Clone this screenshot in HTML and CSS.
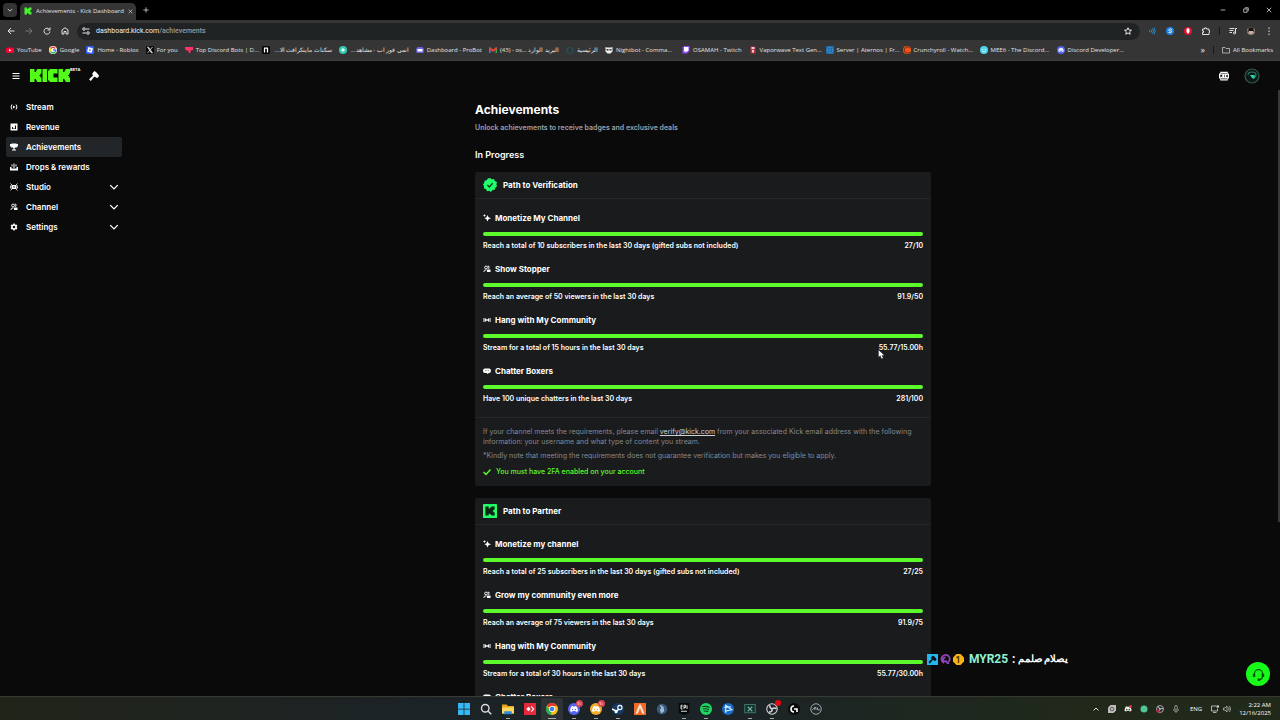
FILE: index.html
```html
<!DOCTYPE html>
<html lang="en">
<head>
  <meta charset="UTF-8">
  <meta name="viewport" content="width=device-width, initial-scale=1.0">
  <title>Achievements - Kick Dashboard</title>
  <link rel="stylesheet" href="styles.css">
</head>
<body>
  <!-- Shared icons -->
  <svg class="sprite" aria-hidden="true">
    <symbol id="i-chevron" viewBox="0 0 16 16"><path d="M2 5l6 6 6-6" fill="none" stroke="currentColor" stroke-width="2.200"/></symbol>
    <symbol id="i-kick" viewBox="0 0 16 16"><path fill="currentColor" d="M1 1h5v3h2V2.500h2V1h5v5h-2v1.500h-1v1h1V10h2v5h-5v-1.500H8V12H6v3H1z"/></symbol>
    <symbol id="i-hammer" viewBox="0 0 16 16"><path fill="currentColor" d="M7 1.500l2-1.500 3 2.500L16 7l-1 3-2.500 1-3-2L8 9.500 3 16l-3-3 6.500-6L5 4.500z"/></symbol>
    <symbol id="i-live" viewBox="0 0 16 16"><path d="M4 3Q0 8 4 13M12 3q4 5 0 10" fill="none" stroke="currentColor" stroke-width="2"/><path fill="currentColor" d="M6 5l5 3-5 3z"/></symbol>
    <symbol id="i-waves" viewBox="0 0 16 16"><path d="M2 4v8M5 5v6M11 5v6M14 4v8" fill="none" stroke="currentColor" stroke-width="2"/><circle cx="8" cy="8" r="1.800" fill="currentColor"/></symbol>
    <symbol id="i-people" viewBox="0 0 16 16"><circle cx="6" cy="5" r="2.800" fill="none" stroke="currentColor" stroke-width="1.800"/><path d="M2 14v-2q0-2 4-2h1M9 2.500h3v4h-2" fill="none" stroke="currentColor" stroke-width="1.800"/><path fill="currentColor" d="M8 9h7v5H8z"/></symbol>
    <symbol id="i-spark" viewBox="0 0 16 16"><path fill="currentColor" d="M9 2l2 4.500L16 8.500 11 10.500 9 15l-2-4.500L3 8.500l4-2zM3 0l1 2.200L6 3l-2 .8L3 6l-1-2.200L0 3l2-.8z"/></symbol>
    <symbol id="i-chat" viewBox="0 0 16 16"><path fill="currentColor" fill-rule="evenodd" d="M4 3h8q4 0 4 4.500T12 12l-4 2v-2H4q-4 0-4-4.500T4 3zm0 4v1h2V7zm3 0v1h2V7zm3 0v1h2V7z"/></symbol>
    <symbol id="i-discord" viewBox="0 0 16 16"><path fill="currentColor" fill-rule="evenodd" d="M3 4q2-1.500 3-1.300l.5.800h3l.5-.8q1-.2 3 1.300 2 4 2 7.500-1.500 1.500-3.500 1.500l-1-1.500H5.500l-1 1.500Q2.500 13 1 11.500 1 8 3 4zm2.500 3.500a1.300 1.400 0 100 2.800 1.300 1.400 0 000-2.800zm5 0a1.300 1.400 0 100 2.800 1.300 1.400 0 000-2.800z"/></symbol>
    <symbol id="i-obs" viewBox="0 0 16 16"><circle cx="8" cy="8" r="7" fill="#202329" stroke="#d8d8d8" stroke-width="1.400"/><path d="M8 8Q5 7 5 3M8 8q3-3 6 0M8 8q1 4-4 4" fill="none" stroke="#d8d8d8" stroke-width="2"/></symbol>
  </svg>

  <!-- Browser chrome -->
  <div class="browser">
    <div class="tab-strip">
      <button class="tab-search" aria-label="Search tabs"><svg><use href="#i-chevron"/></svg></button>
      <div class="tab">
        <svg class="tab-icon"><use href="#i-kick"/></svg>
        <span>Achievements - Kick Dashboard</span>
        <button class="tab-close" aria-label="Close tab"><svg viewBox="0 0 16 16"><path d="M2 2l12 12M14 2L2 14"/></svg></button>
      </div>
      <button class="new-tab" aria-label="New tab"><svg viewBox="0 0 16 16"><path d="M8 1v14M1 8h14"/></svg></button>
      <div class="window-controls">
        <button aria-label="Minimize"><svg viewBox="0 0 16 16"><path d="M2 8h12"/></svg></button>
        <button aria-label="Restore"><svg viewBox="0 0 16 16"><path d="M2 5h9v9H2zM5 2h9v9"/></svg></button>
        <button aria-label="Close"><svg viewBox="0 0 16 16"><path d="M2 2l12 12M14 2L2 14"/></svg></button>
      </div>
    </div>

    <div class="toolbar">
      <div class="nav-buttons">
        <button aria-label="Back"><svg viewBox="0 0 16 16"><path d="M15 8H2M8 2L2 8l6 6"/></svg></button>
        <button class="disabled" aria-label="Forward"><svg viewBox="0 0 16 16"><path d="M1 8h13M8 2l6 6-6 6"/></svg></button>
        <button aria-label="Reload"><svg viewBox="0 0 16 16"><path d="M13 5a6 6 0 1 0 1 4M14 1v5H9"/></svg></button>
        <button aria-label="Home"><svg viewBox="0 0 16 16"><path d="M2 14V6l6-4.500L14 6v8H10V9H6v5z"/></svg></button>
      </div>
      <div class="address-bar">
        <svg viewBox="0 0 16 16"><path d="M8 4h7M1 12h7"/><circle cx="4" cy="4" r="2.500"/><circle cx="12" cy="12" r="2.500"/></svg>
        <span class="url"><b>dashboard.kick.com</b>/achievements</span>
        <svg viewBox="0 0 16 16"><path d="M8 1.500l2 4.500 5 .4-3.800 3.200L12.400 14.500 8 12l-4.400 2.500 1.200-4.900L1 6.400 6 6z"/></svg>
      </div>
      <div class="extensions">
        <svg class="blue" viewBox="0 0 16 16"><path d="M3 7v3M6 5q2 3 0 6M9 3q4 5 0 10M12 1q5 7 0 14"/></svg>
        <svg viewBox="0 0 16 16"><circle class="ext-blue" cx="8" cy="8" r="8"/><path d="M12 5q-4-3-7 1 0 2 6 2 1 5-6 3"/></svg>
        <svg viewBox="0 0 16 16"><path class="ext-red" d="M4.500 0h7L16 4.500v7L11.500 16h-7L0 11.500v-7z"/><path class="ext-hand" d="M5 5l1-2 2-1 3 2v6l-2 3H7L5 10z"/></svg>
        <svg viewBox="0 0 16 16"><path d="M1 4h4V2h4v2h5v4h1v3h-1v4H1v-4h2V8H1z"/></svg>
        <span class="divider"></span>
        <svg viewBox="0 0 16 16"><path d="M1 3h10M1 7h8M1 11h5M13 3v9M13 3h3"/><circle cx="11" cy="12" r="2"/></svg>
        <svg viewBox="0 0 16 16"><circle fill="#8c8580" stroke="none" cx="8" cy="8" r="8"/><path fill="#181214" stroke="none" d="M3 1h10v6l3 2H0l3-2z"/><path fill="#d9a9a2" stroke="none" d="M4 8h8v4l-4 2-4-2z"/></svg>
        <svg viewBox="0 0 16 16"><path d="M8 1v3M8 7v3M8 13v3"/></svg>
      </div>
    </div>

    <nav class="bookmarks" aria-label="Bookmarks">
      <a href="#"><svg viewBox="0 0 16 16"><rect y="3" width="16" height="11" rx="3" fill="#f03"/><path fill="#fff" d="M6 6l5 2.500L6 11z"/></svg><span>YouTube</span></a>
      <a href="#"><svg viewBox="0 0 16 16"><circle cx="8" cy="8" r="8" fill="#fff"/><g fill="none" stroke-width="3"><path d="M12.500 5A5.300 5.300 0 0 0 3.500 5" stroke="#ea4335"/><path d="M3.500 5a5.500 5.500 0 0 0 0 6" stroke="#fbbc05"/><path d="M3.500 11a5.300 5.300 0 0 0 8.500 1" stroke="#34a853"/><path d="M12 12q1.500-2 1.300-4H8" stroke="#4285f4"/></g></svg><span>Google</span></a>
      <a href="#"><svg viewBox="0 0 16 16"><rect width="16" height="16" rx="3" fill="#335fff"/><path fill="#fff" fill-rule="evenodd" d="M5 2l9 3-3 9-9-3zm1.500 4.500L6 9l3 1 .8-2.700z"/></svg><span>Home - Roblox</span></a>
      <a href="#"><svg viewBox="0 0 16 16"><rect width="16" height="16" rx="2" fill="#080808"/><path d="M3 2l8 12h2L5 2zM13 2L3 14" fill="none" stroke="#fff" stroke-width="1.500"/></svg><span>For you</span></a>
      <a class="wide" href="#"><svg viewBox="0 0 16 16"><path fill="#ff3366" d="M0 2h16v6l-5 1v5H8L6 9H3L0 6z"/></svg><span>Top Discord Bots | D...</span></a>
      <a class="wide" href="#"><svg viewBox="0 0 16 16"><rect width="16" height="16" rx="2" fill="#050505"/><path d="M5 13V4h6v9" fill="none" stroke="#fff" stroke-width="2.500"/></svg><span dir="rtl">سكنات ماينكرافت الا...</span></a>
      <a class="wide" href="#"><svg viewBox="0 0 16 16"><circle cx="8" cy="8" r="8" fill="#35c9b4"/><path d="M4 8l4-4 4 4-4 4z" fill="#e8fffa"/></svg><span dir="rtl">انمي فور اب - مشاهد...</span></a>
      <a href="#"><svg viewBox="0 0 16 16"><path fill="#6b61d8" d="M3 2h10l3 4-1 8H1L0 6z"/><path fill="#fff" d="M3 6h10v5H3z"/></svg><span>Dashboard - ProBot</span></a>
      <a class="wide" href="#"><svg viewBox="0 0 16 16"><path fill="#4285f4" d="M0 3h3v11H0z"/><path fill="#34a853" d="M13 3h3v11h-3z"/><path fill="#ea4335" d="M0 3h3l5 4 5-4h3v3l-8 6-8-6z"/></svg><span>(43) - os... البريد الوارد</span></a>
      <a href="#"><svg viewBox="0 0 16 16"><path d="M2 6l6-4 6 4v6l-6 3-6-3z" fill="none" stroke="#175e69" stroke-width="2"/></svg><span dir="rtl">الرئيسية</span></a>
      <a class="wide" href="#"><svg viewBox="0 0 16 16"><path fill="#eee" d="M1 2l3 1h8l3-1v9l-4 4H5l-4-4z"/><path fill="#333" d="M3 6h4v3H3zM9 6h4v3H9z"/></svg><span>Nightbot - Comma...</span></a>
      <a href="#"><svg viewBox="0 0 16 16"><path fill="#9146ff" d="M1 3l3-3h11v10l-5 5H1z"/><path fill="#fff" d="M4 2h9v7l-2 2H8l-2 2v-2H4z"/></svg><span>OSAMAH - Twitch</span></a>
      <a class="wide" href="#"><svg viewBox="0 0 16 16"><path fill="#bd3548" d="M3 1h10v14H3z"/><path fill="#f0c9cc" d="M5 2h6v4H5zM6 8h4v5H6z"/></svg><span>Vaporwave Text Gen...</span></a>
      <a class="wide" href="#"><svg viewBox="0 0 16 16"><path fill="#1768a5" d="M0 0h16v16H0z"/><path d="M3 3h10v10H3zM0 8h16M8 0v16" fill="none" stroke="#4a9ad4"/></svg><span>Server | Aternos | Fr...</span></a>
      <a class="wide" href="#"><svg viewBox="0 0 16 16"><circle cx="8" cy="8" r="8" fill="#ef5818"/><path d="M13 12a6 6 0 1 1 0-8" fill="none" stroke="#7b280b" stroke-width="2"/></svg><span>Crunchyroll - Watch...</span></a>
      <a class="wide" href="#"><svg viewBox="0 0 16 16"><circle cx="8" cy="8" r="8" fill="#51d5ea"/><path d="M4 7h2M10 7h2M5 10q3 3 6 0" fill="none" stroke="#fff" stroke-width="1.500"/></svg><span>MEE6 - The Discord...</span></a>
      <a class="wide" href="#"><svg viewBox="0 0 16 16"><circle cx="8" cy="8" r="8" fill="#5865f2"/><use href="#i-discord" x="2" y="2" width="12" height="12" color="#fff"/></svg><span>Discord Developer...</span></a>
      <div class="bookmarks-end">
        <button aria-label="More bookmarks">»</button>
        <span class="divider"></span>
        <a href="#"><svg viewBox="0 0 16 16"><path d="M1 3h5l2 2h7v9H1z" fill="none" stroke="#ccc" stroke-width="1.500"/></svg><span>All Bookmarks</span></a>
      </div>
    </nav>
  </div>

  <!-- Dashboard -->
  <div class="app">
    <header class="app-header">
      <button class="menu-btn" aria-label="Menu"><svg viewBox="0 0 16 16"><path d="M1 3h14M1 8h14M1 13h14"/></svg></button>
      <a class="logo" href="#" aria-label="Kick">
        <svg viewBox="0 0 40 13"><path fill="currentColor" d="M0 0h4.500v3H6V1.500h1V0h4.500v4.500h-1V6h-1v1h1v1.500h1V13H7v-1.500H6V10H4.500v3H0zM12.500 0H17v13h-4.500zM19.500 0h8v4.500h-4v4h4V13h-8v-1.500H18v-10h1.500zM28.500 0H33v3h1.500V1.500h1V0H40v4.500h-1V6h-1v1h1v1.500h1V13h-4.500v-1.500h-1V10H33v3h-4.500z"/></svg>
      </a>
      <sup class="beta">BETA</sup>
      <svg class="mod-icon"><use href="#i-hammer"/></svg>
      <div class="header-right">
        <button aria-label="Go to channel"><svg viewBox="0 0 16 16"><path fill="currentColor" fill-rule="evenodd" d="M2 1h12v3h2v8h-2v3H2v-3H0V4h2zm1 2v1h10V3zm0 9v1h10v-1zM2 6v4h1V8l2 2h1L4.500 8 6 6zm6 0v4h1V6zm5 0l-2 2 2 2h1V6z"/></svg></button>
        <button class="avatar" aria-label="Account"><svg viewBox="0 0 16 16"><circle cx="8" cy="8" r="7" fill="#0c1917" stroke="#315b51" stroke-width="1.200"/><path d="M4 7q0-3 4-3t4 3q0 2-2 3" fill="none" stroke="#37766a" stroke-width="1.200"/><path fill="#26d6a3" d="M6 7h5l-1 4-2-1z"/></svg></button>
      </div>
    </header>

    <div class="app-body">
      <nav class="sidebar">
        <a href="#"><svg><use href="#i-live"/></svg>Stream</a>
        <a href="#"><svg viewBox="0 0 16 16"><path fill="currentColor" fill-rule="evenodd" d="M1 1h14v14H1zm3 7v4h2V8zm3 2v2h2v-2zm3-5v7h2V5z"/></svg>Revenue</a>
        <a class="active" href="#"><svg viewBox="0 0 16 16"><path fill="currentColor" d="M3 1h10v1h3v4l-3 3H10l-1 2v2h3v2H4v-2h3v-2L6 9H3L0 6V2h3z"/></svg>Achievements</a>
        <a href="#"><svg viewBox="0 0 16 16"><path fill="currentColor" d="M0 8h3v3h10V8h3v7H0zM7 1h2v9H7zM3 3h2v4H3zM11 3h2v4h-2z"/></svg>Drops &amp; rewards</a>
        <a href="#"><svg viewBox="0 0 16 16"><path fill="currentColor" d="M3 4h10v8H3z"/><path d="M1 1l3 3M15 1l-3 3M1 15l3-3M15 15l-3-3M1 5v6M15 5v6" stroke="currentColor" stroke-width="1.500"/><circle cx="8" cy="8" r="1.500" fill="#111"/></svg>Studio<svg class="chevron"><use href="#i-chevron"/></svg></a>
        <a href="#"><svg><use href="#i-people"/></svg>Channel<svg class="chevron"><use href="#i-chevron"/></svg></a>
        <a href="#"><svg viewBox="0 0 16 16"><circle cx="8" cy="8" r="4" fill="none" stroke="currentColor" stroke-width="3"/><path d="M8 1v3M8 12v3M2 4.500L4.500 6M11.500 10l2.500 1.500M2 11.500L4.500 10M11.500 6L14 4.500" stroke="currentColor" stroke-width="3"/></svg>Settings<svg class="chevron"><use href="#i-chevron"/></svg></a>
      </nav>

      <main class="content">
        <h1>Achievements</h1>
        <p class="subtitle">Unlock achievements to receive badges and exclusive deals</p>
        <h2>In Progress</h2>

        <section class="card">
          <header class="card-header">
            <svg viewBox="0 0 16 16"><path fill="#1eff6b" d="M8 0l2 1.500L12.500 1l1 2.300L16 4.500 15.300 7 16 9.500l-2 1.500-.5 2.500-2.500.3L9 16l-2-1.500-2.500.5L3.500 12.700 1 12l.2-2.500L0 7.500 1.500 5.500 1.800 3l2.500-.5L5.500.5z"/><path d="M5 8l2.200 2.200L11 6" fill="none" stroke="#10351c" stroke-width="1.500"/></svg>
            <h3>Path to Verification</h3>
          </header>
          <div class="goals">
            <div class="goal">
              <h4><svg><use href="#i-spark"/></svg>Monetize My Channel</h4>
              <div class="bar"></div>
              <p><span>Reach a total of 10 subscribers in the last 30 days (gifted subs not included)</span><span>27/10</span></p>
            </div>
            <div class="goal">
              <h4><svg><use href="#i-people"/></svg>Show Stopper</h4>
              <div class="bar"></div>
              <p><span>Reach an average of 50 viewers in the last 30 days</span><span>91.9/50</span></p>
            </div>
            <div class="goal">
              <h4><svg><use href="#i-waves"/></svg>Hang with My Community</h4>
              <div class="bar"></div>
              <p><span>Stream for a total of 15 hours in the last 30 days</span><span>55.77/15.00h</span></p>
            </div>
            <div class="goal">
              <h4><svg><use href="#i-chat"/></svg>Chatter Boxers</h4>
              <div class="bar"></div>
              <p><span>Have 100 unique chatters in the last 30 days</span><span>281/100</span></p>
            </div>
          </div>
          <footer class="card-footer">
            <p>If your channel meets the requirements, please email <a href="mailto:verify@kick.com">verify@kick.com</a> from your associated Kick email address with the following information: your username and what type of content you stream.</p>
            <p>*Kindly note that meeting the requirements does not guarantee verification but makes you eligible to apply.</p>
            <p class="requirement"><svg viewBox="0 0 16 16"><path d="M1 8l5 5L15 3" fill="none" stroke="currentColor" stroke-width="3"/></svg>You must have 2FA enabled on your account</p>
          </footer>
        </section>

        <section class="card">
          <header class="card-header">
            <svg viewBox="0 0 16 16"><rect width="16" height="16" rx="1" fill="#22ff66"/><use href="#i-kick" x="2" y="2" width="12" height="12" color="#0b2413"/></svg>
            <h3>Path to Partner</h3>
          </header>
          <div class="goals">
            <div class="goal">
              <h4><svg><use href="#i-spark"/></svg>Monetize my channel</h4>
              <div class="bar"></div>
              <p><span>Reach a total of 25 subscribers in the last 30 days (gifted subs not included)</span><span>27/25</span></p>
            </div>
            <div class="goal">
              <h4><svg><use href="#i-people"/></svg>Grow my community even more</h4>
              <div class="bar"></div>
              <p><span>Reach an average of 75 viewers in the last 30 days</span><span>91.9/75</span></p>
            </div>
            <div class="goal">
              <h4><svg><use href="#i-waves"/></svg>Hang with My Community</h4>
              <div class="bar"></div>
              <p><span>Stream for a total of 30 hours in the last 30 days</span><span>55.77/30.00h</span></p>
            </div>
            <div class="goal">
              <h4><svg><use href="#i-chat"/></svg>Chatter Boxers</h4>
              <div class="bar"></div>
            </div>
          </div>
        </section>
      </main>
    </div>
    <div class="scroll-thumb"></div>

    <button class="help-btn" aria-label="Support"><svg viewBox="0 0 16 16"><path d="M3 10V7a5 5 0 0 1 10 0v3q0 4-5 4.500" fill="none" stroke="#07500c" stroke-width="1.500"/><path fill="#07500c" d="M1 7h3v4H1zM12 7h3v4h-3zM7 13h3v3H7z"/></svg></button>

    <div class="chat-overlay">
      <svg viewBox="0 0 16 16"><rect width="16" height="16" fill="#22b7ee"/><use href="#i-hammer" x="2" y="2" width="12" height="12" color="#07151c"/></svg>
      <svg viewBox="0 0 16 16"><path d="M6 13a6 6 0 1 1 6-1M8 5a3 3 0 1 0 2 5" fill="none" stroke="#9146b8" stroke-width="2.500"/><path fill="#9146b8" d="M8 8l6 6-4 1z"/></svg>
      <svg viewBox="0 0 16 16"><path fill="#f5b314" d="M5 0h6l5 5v6l-5 5H5l-5-5V5z"/><path fill="#5c3a00" d="M5 4l2-1h2v10H7V6H5z"/></svg>
      <span class="chat-name">MYR25</span>
      <span>:</span>
      <span class="chat-text" dir="rtl">يصلام صلمم</span>
    </div>
  </div>

  <!-- Windows taskbar -->
  <footer class="taskbar">
    <div class="pinned">
      <button aria-label="Start"><svg viewBox="0 0 16 16"><path fill="#35b9f5" d="M0 0h7.500v7.500H0zM8.500 0H16v7.500H8.500zM0 8.500h7.500V16H0zM8.500 8.500H16V16H8.500z"/></svg></button>
      <button aria-label="Search"><svg viewBox="0 0 16 16"><circle cx="7" cy="7" r="5" fill="none" stroke="#ddd" stroke-width="1.800"/><path d="M11 11l4 4" stroke="#ddd" stroke-width="2"/></svg></button>
      <button class="open" aria-label="File Explorer"><svg viewBox="0 0 16 16"><path fill="#e8a51e" d="M0 2h6l2 2h8v10H0z"/><path fill="#ffd75e" d="M0 6h16v8H0z"/><path fill="#2a8be0" d="M3 11h10v4H3z"/></svg></button>
      <button aria-label="AnyDesk"><svg viewBox="0 0 16 16"><path fill="#e5283a" d="M0 0h16v16H0z"/><path fill="#fff" d="M6 5l3 3-3 3-3-3zM9 5l1-1 4 4-4 4-1-1 3-3z"/></svg></button>
      <button class="open current" aria-label="Chrome"><svg viewBox="0 0 16 16"><circle cx="8" cy="8" r="8" fill="#fbc116"/><path fill="#e33b2e" d="M8 8L1 4a8 8 0 0 1 14 0H8z"/><path fill="#2da94f" d="M1 4l6 8v4A8 8 0 0 1 1 4z"/><circle cx="8" cy="8" r="4" fill="#fff"/><circle cx="8" cy="8" r="3" fill="#3b7de9"/></svg></button>
      <button class="open" aria-label="Discord"><svg viewBox="0 0 16 16"><circle cx="8" cy="8" r="8" fill="#5865f2"/><use href="#i-discord" x="2" y="2" width="12" height="12" color="#fff"/></svg><span class="badge">9+</span></button>
      <button class="open" aria-label="Discord Canary"><svg viewBox="0 0 16 16"><circle cx="8" cy="8" r="8" fill="#f3ae2b"/><use href="#i-discord" x="2" y="2" width="12" height="12" color="#fff"/></svg><span class="badge">9+</span></button>
      <button class="open" aria-label="Steam"><svg viewBox="0 0 16 16"><circle cx="8" cy="8" r="8" fill="#143a63"/><circle cx="10.500" cy="6" r="2.800" fill="none" stroke="#fff" stroke-width="1.500"/><path d="M0 8l6 3 3-3" fill="none" stroke="#fff" stroke-width="2"/><circle cx="5.500" cy="11.500" r="2" fill="#fff"/></svg></button>
      <button aria-label="FiveM"><svg viewBox="0 0 16 16"><path fill="#ef6b27" d="M0 0h16v16H0z"/><path fill="#f8e3d5" d="M7 2h2l5 12h-3L8 7l-3 7H2z"/></svg></button>
      <button aria-label="Launcher"><svg viewBox="0 0 16 16"><circle cx="8" cy="8" r="7" fill="#385978"/><path fill="#9eb9d3" d="M5 2l5 3 1 6-4 3-2-5 2-2z"/></svg></button>
      <button class="open" aria-label="Epic Games"><svg viewBox="0 0 16 16"><path fill="#080808" d="M1 0h14v13l-7 3-7-3z"/><path d="M4 3v5M4 3h2M4 5h2M4 8h2M8 8V3h2v3H8M12 3v5M4 11h8" fill="none" stroke="#eee" stroke-width="1.200"/></svg></button>
      <button class="open" aria-label="Spotify"><svg viewBox="0 0 16 16"><circle cx="8" cy="8" r="8" fill="#1ed760"/><path d="M3 5q5-1.500 10 1M4 8q4-1 8 1M5 11q3-1 6 .5" fill="none" stroke="#123c21" stroke-width="1.500"/></svg></button>
      <button aria-label="Battle.net"><svg viewBox="0 0 16 16"><circle cx="8" cy="8" r="8" fill="#176bc7"/><path d="M5 13V3l8 6-9 2M3 6l9-1" fill="none" stroke="#d5f2ff" stroke-width="1.500"/></svg></button>
      <button class="open" aria-label="Xbox Game Bar"><svg viewBox="0 0 16 16"><rect x="1" y="2" width="14" height="11" fill="#16312c" stroke="#447e70" stroke-width="1.200"/><path d="M5 5l6 6M11 5l-6 6" stroke="#6bb49e" stroke-width="1.500"/></svg></button>
      <button class="open" aria-label="OBS Studio"><svg><use href="#i-obs"/></svg><span class="badge dot"></span></button>
      <button aria-label="Logitech G Hub"><svg viewBox="0 0 16 16"><circle cx="8" cy="8" r="8" fill="#090a0a"/><path d="M8 4a4 4 0 0 0 0 8M8 8h4v4" fill="none" stroke="#fff" stroke-width="2.200"/></svg></button>
      <button aria-label="JBL"><svg viewBox="0 0 16 16"><circle cx="8" cy="8" r="7" fill="#22282a" stroke="#ccc"/><path d="M3 9l2-2M6 9V6h2v3M10 9V6M10 9h3" fill="none" stroke="#ccc"/></svg></button>
    </div>
    <div class="tray">
      <svg viewBox="0 0 16 16"><path d="M3 11l5-5 5 5" fill="none" stroke="#ddd" stroke-width="2"/></svg>
      <svg viewBox="0 0 16 16"><path fill="#bbb" d="M5 0h11v11l-5 5H0V5z"/><circle cx="8" cy="8" r="3.500" fill="none" stroke="#444" stroke-width="1.500"/></svg>
      <svg viewBox="0 0 16 16"><use href="#i-discord" color="#eee"/><circle cx="13" cy="3" r="3" fill="#e33445"/></svg>
      <svg viewBox="0 0 16 16"><circle cx="8" cy="8" r="7" fill="#4cc795"/></svg>
      <svg viewBox="0 0 16 16"><use href="#i-obs"/><circle cx="4" cy="12" r="3.500" fill="#b9253c"/></svg>
      <svg viewBox="0 0 16 16"><rect x="5.500" y="1" width="5" height="9" rx="2.500" fill="none" stroke="#bbb" stroke-width="1.500"/><path d="M3 8q0 5 5 5t5-5M8 13v3" fill="none" stroke="#bbb" stroke-width="1.300"/></svg>
      <span class="lang">ENG</span>
      <div class="quick-settings">
        <svg viewBox="0 0 16 16"><path d="M10 2H1v10h12V7M4 15h7" fill="none" stroke="#ddd" stroke-width="1.500"/><path fill="#ddd" d="M11 1h5v4h-5z"/></svg>
        <svg viewBox="0 0 16 16"><path d="M1 6h3l4-4v12l-4-4H1zM11 5q2 3 0 6M13 2q4 6 0 12" fill="none" stroke="#ddd" stroke-width="1.300"/></svg>
      </div>
      <time class="clock" datetime="2025-12-16T02:22">2:22 AM<br>12/16/2025</time>
    </div>
  </footer>

  <svg class="cursor" viewBox="0 0 16 24" aria-hidden="true"><path fill="#fff" stroke="#111" d="M1 1v18l4-4 3 7 4-2-3-6h6z"/></svg>
</body>
</html>
```
FILE: styles.css
```css
* {
  box-sizing: border-box;
  margin: 0;
  padding: 0;
}

:root {
  --green: #5dfa2b;
  --bg: #0a0a0b;
  --card: #191b1d;
  --line: #25282b;
  --chrome: #353535;
  --ui-font: "Open Sans", "Noto Sans", sans-serif;
}

body {
  display: flex;
  flex-direction: column;
  height: 100vh;
  overflow: hidden;
  background: var(--bg);
  color: #fff;
  font-family: Inter, sans-serif;
  font-size: 7px;
}

button {
  border: 0;
  background: none;
  color: inherit;
  font: inherit;
  display: flex;
  align-items: center;
  justify-content: center;
}

a {
  color: inherit;
  text-decoration: none;
}

svg {
  display: block;
  flex: none;
  width: 8px;
  height: 8px;
}

.sprite {
  position: absolute;
  width: 0;
  height: 0;
}

/* Browser chrome */
.browser {
  flex: none;
  background: var(--chrome);
  color: #e3e3e3;
  font-family: var(--ui-font);
  font-size: 6px;
  font-weight: 500;
  border-bottom: 1px solid #3f3f3f;
}

.tab-strip {
  display: flex;
  align-items: center;
  height: 20px;
  padding-left: 3px;
  background: #000;
}

.tab-strip svg,
.nav-buttons svg,
.address-bar svg,
.extensions svg {
  fill: none;
  stroke: currentColor;
  stroke-width: 2;
}

.tab-search {
  width: 14px;
  height: 14px;
  border-radius: 4px;
  background: #333;
}

.tab-search svg {
  width: 6px;
  height: 6px;
}

.tab {
  display: flex;
  align-items: center;
  align-self: flex-end;
  gap: 4px;
  width: 116px;
  height: 17px;
  margin-left: 3px;
  padding: 0 6px 1px 4px;
  border-radius: 5px 5px 0 0;
  background: var(--chrome);
  white-space: nowrap;
}

.tab .tab-icon {
  color: #45f52b;
  stroke: none;
}

.tab-close {
  margin-left: auto;
}

.tab-close svg {
  width: 5px;
  height: 5px;
}

.new-tab {
  margin-left: 7px;
}

.new-tab svg,
.window-controls svg {
  width: 6px;
  height: 6px;
}

.window-controls {
  display: flex;
  margin-left: auto;
}

.window-controls button {
  width: 23px;
  height: 20px;
}

.toolbar {
  display: flex;
  align-items: center;
  gap: 8px;
  height: 22px;
  padding: 0 7px;
}

.nav-buttons {
  display: flex;
  gap: 10px;
}

.disabled {
  color: #777;
}

.address-bar {
  flex: 1;
  display: flex;
  align-items: center;
  gap: 6px;
  height: 17px;
  padding: 0 8px 0 5px;
  border-radius: 9px;
  background: #202324;
}

.address-bar .url {
  flex: 1;
  color: #999;
  font-family: Roboto, sans-serif;
  font-size: 7px;
}

.url b {
  color: #eee;
  font-weight: 400;
}

.extensions {
  display: flex;
  align-items: center;
  gap: 10px;
}

.extensions .divider {
  margin: 0 -1px;
}

.extensions .blue {
  color: #298bd0;
}

.ext-blue {
  fill: #1d83dc;
  stroke: none;
}

.ext-red {
  fill: #d9122b;
  stroke: none;
}

.ext-hand {
  fill: #fff;
  stroke: none;
}

.divider {
  width: 1px;
  height: 8px;
  background: #171717;
}

.bookmarks {
  display: flex;
  align-items: center;
  gap: 7px;
  height: 18px;
  padding: 0 7px 2px 6px;
}

.bookmarks a {
  display: flex;
  align-items: center;
  gap: 3px;
  flex: none;
  white-space: nowrap;
}

.bookmarks .wide {
  width: 70px;
}

.bookmarks .wide span {
  flex: 1;
}

.bookmarks-end {
  display: flex;
  align-items: center;
  gap: 8px;
  margin-left: auto;
}

.bookmarks-end button {
  font-size: 9px;
  line-height: 10px;
}

/* Dashboard shell */
.app {
  position: relative;
  flex: 1;
  min-height: 0;
  display: flex;
  flex-direction: column;
  overflow: hidden;
}

.app-header {
  flex: none;
  display: flex;
  align-items: center;
  height: 29px;
  padding: 0 20px 0 12px;
}

.menu-btn svg {
  stroke: #fff;
  stroke-width: 2;
}

.logo {
  margin-left: 10px;
  color: #53fc18;
}

.logo svg {
  width: 40px;
  height: 13px;
}

.beta {
  align-self: flex-start;
  margin-top: 6px;
  font-size: 4px;
  line-height: 6px;
  font-weight: 700;
}

.mod-icon {
  width: 10px;
  height: 10px;
  margin-left: 9px;
}

.header-right {
  display: flex;
  align-items: center;
  gap: 15px;
  margin-left: auto;
}

.header-right svg {
  width: 10px;
  height: 10px;
}

.header-right .avatar svg {
  width: 16px;
  height: 16px;
}

.app-body {
  flex: 1;
  min-height: 0;
  display: flex;
  padding-right: 2px;
}

.sidebar {
  flex: none;
  width: 128px;
  padding: 7px 6px;
  font-size: 8px;
  font-weight: 600;
}

.sidebar a {
  display: flex;
  align-items: center;
  gap: 8px;
  height: 20px;
  padding: 0 3px 0 4px;
  border-radius: 2px;
}

.sidebar .active {
  background: #232629;
}

.sidebar .chevron {
  width: 10px;
  height: 10px;
  margin-left: auto;
}

/* Achievements */
.content {
  flex: none;
  width: 456px;
  margin: 0 auto;
  padding-top: 12px;
}

h1 {
  font-size: 12px;
  line-height: 16px;
  font-weight: 700;
}

.subtitle {
  margin-top: 5px;
  line-height: 10px;
  font-weight: 600;
  color: #9da0a8;
}

h2 {
  margin: 16px 0 11px;
  font-size: 9px;
  line-height: 12px;
  font-weight: 600;
}

.card {
  margin-bottom: 12px;
  border-radius: 2px;
  background: var(--card);
}

.card-header {
  display: flex;
  align-items: center;
  gap: 6px;
  height: 27px;
  padding: 0 8px;
  border-bottom: 1px solid var(--line);
}

.card-header svg {
  width: 14px;
  height: 14px;
}

h3,
h4 {
  font-size: 8px;
  line-height: 12px;
  font-weight: 700;
}

.goals {
  display: flex;
  flex-direction: column;
  gap: 12px;
  padding: 13px 8px;
}

.goal h4 {
  display: flex;
  align-items: center;
  gap: 4px;
}

.bar {
  height: 4px;
  margin: 8px 0 5px;
  border-radius: 2px;
  background: var(--green);
}

.goal p {
  display: flex;
  justify-content: space-between;
  line-height: 10px;
  font-weight: 600;
}

.card-footer {
  padding: 9px 8px;
  border-top: 1px solid var(--line);
  line-height: 10px;
  color: #868990;
}

.card-footer p + p {
  margin-top: 4px;
}

.card-footer a {
  color: #d0d2d5;
  text-decoration: underline;
}

.card-footer .requirement {
  display: flex;
  align-items: center;
  gap: 5px;
  margin-top: 6px;
  color: var(--green);
  font-weight: 500;
}

/* Floating items */
.scroll-thumb {
  position: absolute;
  top: 29px;
  right: 0;
  width: 2px;
  height: 68%;
  background: #37393b;
}

.help-btn {
  position: absolute;
  right: 10px;
  bottom: 10px;
  width: 24px;
  height: 24px;
  border-radius: 50%;
  background: #16fb18;
}

.help-btn svg {
  width: 13px;
  height: 13px;
}

.chat-overlay {
  position: absolute;
  right: 212px;
  bottom: 29px;
  display: flex;
  align-items: center;
  gap: 2px;
  font: 700 12px/16px Roboto, "Noto Sans", sans-serif;
}

.chat-overlay svg {
  width: 11px;
  height: 11px;
}

.chat-name {
  margin: 0 2px 0 3px;
  color: #8ff0d0;
}

.chat-text {
  font-size: 10px;
}

.cursor {
  position: absolute;
  left: 69%;
  top: 349px;
  width: 7px;
  height: 11px;
  margin-left: -5px;
}

/* Taskbar */
.taskbar {
  flex: none;
  display: grid;
  grid-template-columns: 1fr auto 1fr;
  align-items: center;
  height: 24px;
  border-top: 1px solid #3a3a34;
  background: linear-gradient(90deg, #202419, #1c2327 35%, #1c2327 55%, #20291a 85%);
  font-family: var(--ui-font);
  font-size: 6px;
}

.pinned {
  grid-column: 2;
  display: flex;
}

.pinned button {
  position: relative;
  width: 22px;
  height: 22px;
  border-radius: 2px;
}

.pinned svg {
  width: 12px;
  height: 12px;
}

.pinned .current {
  background: #2d3335;
}

.pinned .open::after {
  content: "";
  position: absolute;
  bottom: 1px;
  left: 50%;
  width: 4px;
  height: 1px;
  margin-left: -2px;
  background: #aaa;
}

.pinned .current::after {
  width: 8px;
  margin-left: -4px;
}

.badge {
  position: absolute;
  top: 2px;
  right: 2px;
  width: 7px;
  height: 7px;
  border-radius: 50%;
  background: #d94650;
  font-size: 4px;
  line-height: 7px;
}

.badge.dot {
  width: 6px;
  height: 6px;
  background: #e50914;
}

.tray {
  display: flex;
  align-items: center;
  justify-content: flex-end;
  gap: 8px;
  padding-right: 9px;
}

.lang {
  margin: 0 1px 0 2px;
}

.quick-settings {
  display: flex;
  gap: 4px;
}

.clock {
  line-height: 8px;
  text-align: right;
}
```
